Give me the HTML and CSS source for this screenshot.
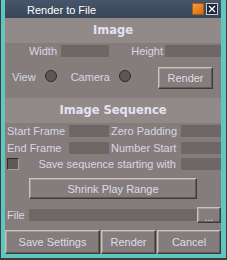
FILE: index.html
```html
<!DOCTYPE html>
<html lang="en">
<head>
    <meta charset="UTF-8">
    <title>Render to File</title>
    <link rel="stylesheet" href="styles.css">
</head>
<body>
    <div class="window">
        <!-- Заголовок окна -->
        <div class="titlebar">
            <span class="title">Render to File</span>
            <span class="tb-btn tb-min"></span>
            <span class="tb-btn tb-close">
                <svg width="8" height="8" viewBox="0 0 8 8"><path d="M1 1L7 7M7 1L1 7" stroke="#fff" stroke-width="1.3"/></svg>
            </span>
        </div>

        <!-- Image -->
        <div class="band">Image</div>
        <div class="panel image-panel">
            <div class="size-row">
                <span class="size-label">Width</span>
                <span class="field w-field"></span>
                <span class="size-label h-label">Height</span>
                <span class="field h-field"></span>
            </div>
            <div class="view-row">
                <span class="lbl">View</span>
                <span class="radio"></span>
                <span class="lbl cam-label">Camera</span>
                <span class="radio"></span>
                <button class="btn render-btn">Render</button>
            </div>
        </div>

        <!-- Image Sequence -->
        <div class="band">Image Sequence</div>
        <div class="panel seq-panel">
            <div class="seq-grid">
                <span class="lbl">Start Frame</span>
                <span class="field"></span>
                <span class="lbl">Zero Padding</span>
                <span class="field"></span>
                <span class="lbl">End Frame</span>
                <span class="field"></span>
                <span class="lbl">Number Start</span>
                <span class="field"></span>
            </div>
            <div class="check-row">
                <span class="checkbox"></span>
                <span class="lbl check-label">Save sequence starting with</span>
                <span class="field seq-field"></span>
            </div>
            <button class="btn shrink-btn">Shrink Play Range</button>
            <div class="file-row">
                <span class="lbl file-label">File</span>
                <span class="field file-field"></span>
                <button class="btn dots-btn">...</button>
            </div>
        </div>

        <!-- Кнопки внизу -->
        <div class="footer">
            <button class="btn save-btn">Save Settings</button>
            <button class="btn foot-render">Render</button>
            <button class="btn cancel-btn">Cancel</button>
        </div>
    </div>
</body>
</html>
```

FILE: styles.css
```css
/* Общие стили */
html, body {
    margin: 0;
    padding: 0;
    height: 100%;
    background: #3c3c3c;
    font-family: 'Liberation Sans', Arial, sans-serif;
    font-size: 11px;
    overflow: hidden;
}

.window {
    margin-left: 1px;
    width: 216px;
    height: 254px;
    border-left: 4px solid #5fc6c0;
    border-right: 5px solid #5fc6c0;
    border-bottom: 4px solid #5fc6c0;
    background: #857d7b;
    display: flex;
    flex-direction: column;
}

/* Заголовок */
.titlebar {
    height: 18px;
    display: flex;
    align-items: center;
    padding: 0 3px 0 22px;
    background: linear-gradient(#47556a, #3a4658);
    color: #fff;
}

.title {
    flex: 1;
    font-size: 11px;
    margin-top: 1px;
}

.tb-btn {
    width: 12px;
    height: 12px;
    box-sizing: border-box;
}

.tb-min {
    background: linear-gradient(135deg, #f5a040, #d06a10);
    border: 1px solid #a85a18;
    margin-right: 2px;
}

.tb-close {
    background: #1d2636;
    border: 1px solid #c4ccd6;
    display: flex;
    align-items: center;
    justify-content: center;
}

.tb-close svg {
    display: block;
}

/* Полосы с заголовками секций */
.band {
    height: 25px;
    line-height: 25px;
    text-align: center;
    background: #928a88;
    color: #e2e2f4;
    font-family: 'DejaVu Sans', sans-serif;
    font-weight: bold;
    font-size: 11.5px;
}

.panel {
    background: #857d7b;
}

.lbl, .size-label {
    color: #d6d6e6;
    line-height: 12px;
    white-space: nowrap;
}

.field {
    display: block;
    height: 12px;
    background: #6d6766;
}

/* Image */
.image-panel {
    height: 55px;
    box-sizing: border-box;
    padding-top: 2px;
}

.size-row {
    display: flex;
    height: 12px;
}

.size-label {
    width: 52px;
    text-align: right;
    margin-right: 4px;
}

.w-field {
    width: 48px;
}

.h-label {
    width: 54px;
    margin-right: 2px;
}

.h-field {
    flex: 1;
}

.view-row {
    display: flex;
    align-items: flex-start;
    margin-top: 10px;
    height: 22px;
    padding: 0 8px 0 7px;
}

.view-row .lbl {
    margin-top: 4px;
}

.radio {
    width: 12px;
    height: 12px;
    box-sizing: border-box;
    margin: 3px 14px 0 9px;
    border-radius: 50%;
    background: #5d5755;
    border: 1px solid #2f2b2b;
}

.cam-label {
    margin-left: 0;
}

/* Кнопки с объёмной рамкой */
.btn {
    font-family: 'Liberation Sans', Arial, sans-serif;
    font-size: 11px;
    color: #dcdcec;
    background: #857d7b;
    border: 1px solid;
    border-color: #cbc3c1 #3f3938 #3f3938 #cbc3c1;
    box-shadow: inset -1px -1px 0 #625b5a, inset 1px 1px 0 #a39b99;
    padding: 0;
    margin: 0;
    cursor: pointer;
}

.render-btn {
    margin-left: auto;
    width: 55px;
    height: 22px;
}

/* Image Sequence */
.seq-panel {
    height: 107px;
    box-sizing: border-box;
    padding-top: 2px;
}

.seq-grid {
    display: grid;
    grid-template-columns: 64px 40px 72px 40px;
    grid-auto-rows: 12px;
    row-gap: 4.5px;
}

.seq-grid .lbl {
    padding-left: 2px;
}

.check-row {
    display: flex;
    margin-top: 4.5px;
    height: 12px;
}

.checkbox {
    width: 12px;
    height: 12px;
    box-sizing: border-box;
    margin-left: 2px;
    background: #5f5957;
    border: 1px solid;
    border-color: #2f2b2b #a8a09e #a8a09e #2f2b2b;
}

.check-label {
    flex: 1;
    text-align: right;
    padding-right: 5px;
}

.seq-field {
    width: 40px;
}

.shrink-btn {
    display: block;
    margin: 8px 0 0 24px;
    width: 168px;
    height: 21px;
}

.file-row {
    display: flex;
    align-items: center;
    margin-top: 8px;
    height: 16px;
}

.file-label {
    width: 22px;
    padding-left: 2px;
}

.file-field {
    width: 168px;
}

.dots-btn {
    width: 24px;
    height: 16px;
    line-height: 20px;
    font-size: 10px;
}

/* Нижние кнопки */
.footer {
    display: flex;
    gap: 1px;
    height: 24px;
}

.footer .btn {
    height: 24px;
}

.save-btn {
    width: 95px;
}

.foot-render {
    width: 55px;
}

.cancel-btn {
    flex: 1;
}
```
